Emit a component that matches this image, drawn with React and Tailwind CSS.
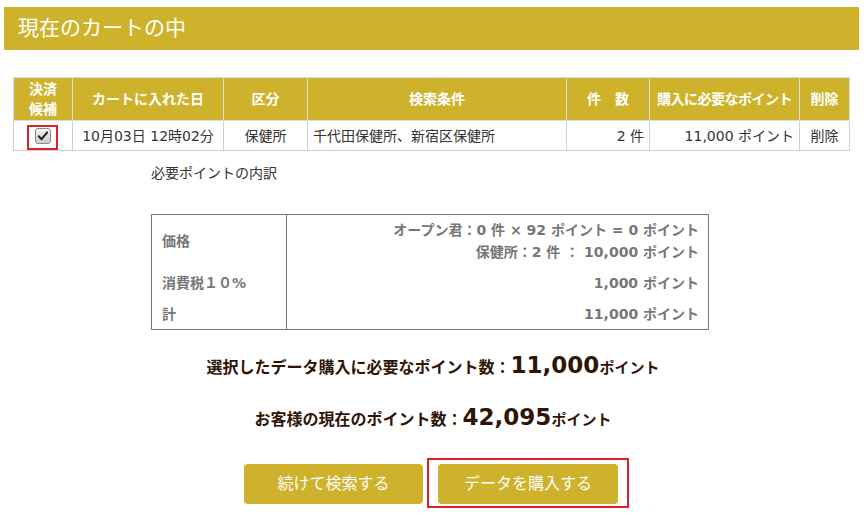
const GOLD = 'bg-[#cfb22b]'

function CheckBox() {
  return (
    <svg width="16" height="16" viewBox="0 0 16 16">
      <defs>
        <linearGradient id="cb" x1="0" y1="0" x2="0" y2="1">
          <stop offset="0" stopColor="#f4f4f4" />
          <stop offset="1" stopColor="#c9c9c9" />
        </linearGradient>
      </defs>
      <rect x="0.5" y="0.5" width="15" height="15" rx="2.5" fill="url(#cb)" stroke="#8c8c8c" />
      <path d="M3.8 8.2 L6.6 11.2 L12.2 4.4" fill="none" stroke="#222" strokeWidth="2" strokeLinecap="round" strokeLinejoin="round" />
    </svg>
  )
}

export default function App() {
  const th = 'border border-[#dcdcdc] text-white font-bold text-center leading-[20px]'
  const td = 'border border-[#cfcfcf] text-[#333] leading-[20px]'

  return (
    <div className="w-[866px] h-[527px] overflow-hidden bg-white pt-[7px] font-['DejaVu_Sans','Noto_Sans_CJK_JP',sans-serif]">
      {/* Title */}
      <div className={`ml-[4px] w-[855px] h-[43px] ${GOLD} flex items-center pl-[14px] text-white text-[21px]`}>
        現在のカートの中
      </div>

      {/* Cart table */}
      <table className="mt-[27px] ml-[13px] w-[836px] border-collapse text-[14px] table-fixed">
        <colgroup>
          <col className="w-[59px]" />
          <col className="w-[151px]" />
          <col className="w-[84px]" />
          <col className="w-[259px]" />
          <col className="w-[83px]" />
          <col className="w-[150px]" />
          <col className="w-[50px]" />
        </colgroup>
        <thead>
          <tr className={`${GOLD} h-[43px]`}>
            <th className={th}>決済<br />候補</th>
            <th className={th}>カートに入れた日</th>
            <th className={th}>区分</th>
            <th className={th}>検索条件</th>
            <th className={th}>件　数</th>
            <th className={`${th} whitespace-nowrap tracking-[-0.5px]`}>購入に必要なポイント</th>
            <th className={th}>削除</th>
          </tr>
        </thead>
        <tbody>
          <tr className="h-[30px]">
            <td className={`${td} text-center`}>
              <div className="relative flex justify-center items-center h-[20px]">
                <CheckBox />
                <div className="absolute left-[13px] top-[-1px] w-[31px] h-[25px] border-2 border-[#e0202a]" />
              </div>
            </td>
            <td className={`${td} text-center whitespace-nowrap`}>10月03日 12時02分</td>
            <td className={`${td} text-center`}>保健所</td>
            <td className={`${td} pl-[5px]`}>千代田保健所、新宿区保健所</td>
            <td className={`${td} text-right pr-[5px]`}>2 件</td>
            <td className={`${td} text-right pr-[5px] whitespace-nowrap`}>11,000 ポイント</td>
            <td className={`${td} text-center`}>削除</td>
          </tr>
        </tbody>
      </table>

      {/* Breakdown */}
      <div className="ml-[151px] mt-[12px] text-[14px] leading-[20px] text-[#333]">必要ポイントの内訳</div>

      <table className="mt-[31px] ml-[151px] w-[558px] border-collapse border border-[#777] text-[14px] font-bold text-[#777] leading-[22px]">
        <colgroup>
          <col className="w-[135px]" />
          <col />
        </colgroup>
        <tbody>
          <tr className="h-[53px]">
            <td className="pl-[10px] border-r border-[#777]">価格</td>
            <td className="pr-[9px] text-right">
              <div>オープン君：0 件 × 92 ポイント = 0 ポイント</div>
              <div>保健所：2 件 ： 10,000 ポイント</div>
            </td>
          </tr>
          <tr className="h-[31px]">
            <td className="pl-[10px] border-r border-[#777]">消費税１０%</td>
            <td className="pr-[9px] text-right">1,000 ポイント</td>
          </tr>
          <tr className="h-[31px]">
            <td className="pl-[10px] border-r border-[#777]">計</td>
            <td className="pr-[9px] text-right">11,000 ポイント</td>
          </tr>
        </tbody>
      </table>

      {/* Totals */}
      <div className="mt-[19px] h-[32px] flex justify-center items-baseline font-bold text-[#2e1508] leading-[32px]">
        <span className="text-[16px]">選択したデータ購入に必要なポイント数：</span>
        <span className="text-[23px]">11,000</span>
        <span className="text-[15px]">ポイント</span>
      </div>
      <div className="mt-[20px] h-[32px] flex justify-center items-baseline font-bold text-[#2e1508] leading-[32px]">
        <span className="text-[16px]">お客様の現在のポイント数：</span>
        <span className="text-[23px]">42,095</span>
        <span className="text-[15px]">ポイント</span>
      </div>

      {/* Buttons */}
      <div className="mt-[31px] flex justify-center gap-[15px] pr-[4px]">
        <button className={`w-[179px] h-[40px] rounded-[4px] ${GOLD} text-white text-[16px]`}>
          続けて検索する
        </button>
        <div className="relative">
          <button className={`w-[180px] h-[40px] rounded-[4px] ${GOLD} text-white text-[16px]`}>
            データを購入する
          </button>
          <div className="absolute left-[-11px] right-[-11px] top-[-6px] bottom-[-4px] border-2 border-[#e0202a]" />
        </div>
      </div>
    </div>
  )
}
